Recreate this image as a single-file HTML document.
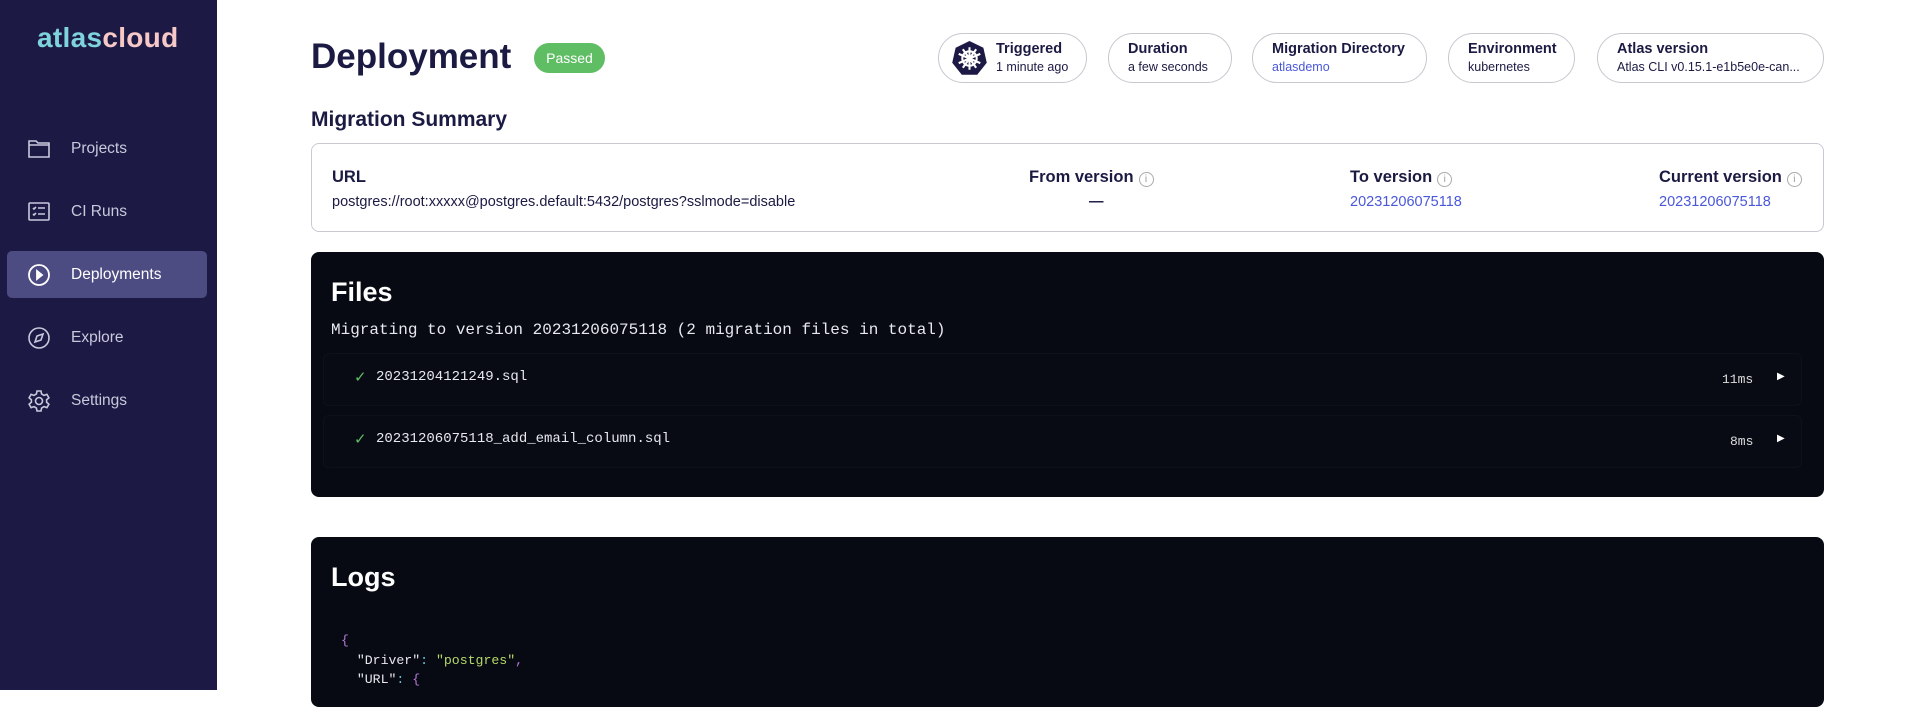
<!DOCTYPE html>
<html><head><meta charset="utf-8"><style>
*{box-sizing:border-box;margin:0;padding:0}
body{width:1912px;height:690px;overflow:hidden;background:#fff;font-family:"Liberation Sans",sans-serif;position:relative;color:#1b1a43}
.sb{position:absolute;left:0;top:0;width:217px;height:690px;background:#1c1a44}
.logo{position:absolute;left:37px;top:22px;font-size:28px;font-weight:bold;letter-spacing:0.3px}
.nav{position:absolute;left:7px;width:200px;height:47px;border-radius:5px;color:#c9c8dc;font-size:15.5px}
.nav span{position:absolute;left:64px;top:15px}
.nav svg{position:absolute;left:20px;top:12px}
.act{background:#4c4b82;color:#fff}
.abs{position:absolute}
h1{position:absolute;left:311px;top:37px;font-size:35px;font-weight:bold;color:#1b1a43}
.badge{position:absolute;left:534px;top:43px;width:71px;height:30px;border-radius:15px;background:#5fbe64;color:#fff;font-size:14px;text-align:center;line-height:30px}
.chip{position:absolute;top:33px;height:50px;border:1px solid #c7c7cf;border-radius:25px;padding:7px 0 0 19px}
.chip b{display:block;font-size:14.5px;color:#1b1a43}
.chip i{display:block;font-style:normal;font-size:12.5px;margin-top:3px;color:#1b1a43}
.lnk{color:#4a57d9!important}
.sum{position:absolute;left:311px;top:143px;width:1513px;height:89px;border:1px solid #c9c9d3;border-radius:8px}
.lab{position:absolute;font-size:16.5px;font-weight:bold;color:#1b1a43}
.val{position:absolute;font-size:14.5px;color:#1b1a43}
.info{display:inline-block;width:15px;height:15px;border:1px solid #aaa;border-radius:50%;vertical-align:0px;margin-left:5px;font-size:10px;color:#999;text-align:center;line-height:13px;font-weight:normal}
.dark{position:absolute;left:311px;width:1513px;background:#070a12;border-radius:8px}
.dh{position:absolute;left:20px;font-size:27px;font-weight:bold;color:#fff}
.mono{font-family:"Liberation Mono",monospace}
.row{position:absolute;left:12px;width:1479px;height:53px;border-radius:6px;background:#080b14;border:1px solid #0e111a}
</style></head><body>
<div class="sb">
<div class="logo"><span style="color:#7fd3dc">atlas</span><span style="color:#f6c8c8">cloud</span></div>
<div class="nav" style="top:125px"><svg width="24" height="22" viewBox="0 0 24 22" fill="none" stroke="#c9c8dc" stroke-width="1.6"><path d="M2 4h7l2 2h11v14H2z"/><path d="M2 8h20"/></svg><span>Projects</span></div>
<div class="nav" style="top:188px"><svg width="24" height="22" viewBox="0 0 24 22" fill="none" stroke="#c9c8dc" stroke-width="1.6"><rect x="2" y="3" width="20" height="17" rx="1"/><path d="M6 8l1 1 2-2M6 14l1 1 2-2M11 8h7M11 14h7"/></svg><span>CI Runs</span></div>
<div class="nav act" style="top:251px"><svg width="24" height="24" viewBox="0 0 24 24" fill="none" stroke="#fff" stroke-width="1.8"><circle cx="12" cy="12" r="10"/><path d="M10 8l5 4-5 4z" fill="#fff"/></svg><span>Deployments</span></div>
<div class="nav" style="top:314px"><svg width="24" height="24" viewBox="0 0 24 24" fill="none" stroke="#c9c8dc" stroke-width="1.6"><circle cx="12" cy="12" r="10"/><path d="M16 8l-2 6-6 2 2-6z"/></svg><span>Explore</span></div>
<div class="nav" style="top:377px"><svg width="24" height="24" viewBox="0 0 24 24" fill="none" stroke="#c9c8dc" stroke-width="1.6"><circle cx="12" cy="12" r="3.5"/><path d="M10 2h4l.6 3 2.4 1.4 2.9-1 2 3.4-2.3 2v2.4l2.3 2-2 3.4-2.9-1L14.6 19l-.6 3h-4l-.6-3L7 17.6l-2.9 1-2-3.4 2.3-2v-2.4l-2.3-2 2-3.4 2.9 1L9.4 5z"/></svg><span>Settings</span></div>
</div>

<h1>Deployment</h1>
<div class="badge">Passed</div>

<div class="chip" style="left:938px;width:149px;padding-left:57px"><svg class="abs" style="left:12px;top:6px" width="37" height="37" viewBox="0 0 36 36"><path d="M18 1l13.5 6.5 3.3 14.6-9.3 11.7H10.5L1.2 22.1 4.5 7.5z" fill="#1c1a44"/><g fill="none" stroke="#fff" stroke-width="2"><circle cx="18" cy="18" r="7"/><path d="M18 7v22M7.5 13.5l21 9M7.5 22.5l21-9M11.5 27l13-18M11.5 9l13 18"/></g></svg><b>Triggered</b><i>1 minute ago</i></div>
<div class="chip" style="left:1108px;width:124px"><b>Duration</b><i>a few seconds</i></div>
<div class="chip" style="left:1252px;width:175px"><b>Migration Directory</b><i class="lnk">atlasdemo</i></div>
<div class="chip" style="left:1448px;width:127px"><b>Environment</b><i>kubernetes</i></div>
<div class="chip" style="left:1597px;width:227px"><b>Atlas version</b><i>Atlas CLI v0.15.1-e1b5e0e-can...</i></div>

<div class="abs" style="left:311px;top:108px;font-size:21px;font-weight:bold">Migration Summary</div>
<div class="sum">
<div class="lab" style="left:20px;top:24px">URL</div>
<div class="val" style="left:20px;top:50px">postgres://root:xxxxx@postgres.default:5432/postgres?sslmode=disable</div>
<div class="lab" style="left:717px;top:24px">From version<span class="info">i</span></div>
<div class="val" style="left:777px;top:50px;font-weight:bold">—</div>
<div class="lab" style="left:1038px;top:24px">To version<span class="info">i</span></div>
<div class="val" style="left:1038px;top:50px;color:#4a57d9">20231206075118</div>
<div class="lab" style="left:1347px;top:24px">Current version<span class="info">i</span></div>
<div class="val" style="left:1347px;top:50px;color:#4a57d9">20231206075118</div>
</div>

<div class="dark" style="top:252px;height:245px">
<div class="dh" style="top:25px">Files</div>
<div class="abs mono" style="left:20px;top:69px;font-size:16px;color:#e8e8ee">Migrating to version 20231206075118 (2 migration files in total)</div>
<div class="row" style="top:101px"><span class="abs" style="left:30px;top:14px;color:#5fbe64;font-size:15px">✓</span><span class="abs mono" style="left:52px;top:15px;font-size:14px;color:#e8e8ee">20231204121249.sql</span><span class="abs mono" style="left:1398px;top:18px;font-size:13px;color:#ddd">11ms</span><span class="abs" style="left:1453px;top:17px;color:#fff;font-size:10px">▶</span></div>
<div class="row" style="top:163px"><span class="abs" style="left:30px;top:14px;color:#5fbe64;font-size:15px">✓</span><span class="abs mono" style="left:52px;top:15px;font-size:14px;color:#e8e8ee">20231206075118_add_email_column.sql</span><span class="abs mono" style="left:1406px;top:18px;font-size:13px;color:#ddd">8ms</span><span class="abs" style="left:1453px;top:17px;color:#fff;font-size:10px">▶</span></div>
</div>

<div class="dark" style="top:537px;height:170px">
<div class="dh" style="top:25px">Logs</div>
<div class="abs mono" style="left:30px;top:94px;font-size:13.2px;line-height:19.5px;color:#e8e8ee;white-space:pre"><span style="color:#b57ad9">{</span>
  "Driver"<span style="color:#6cc3d9">:</span> <span style="color:#b5d96a">"postgres"</span><span style="color:#b57ad9">,</span>
  "URL"<span style="color:#6cc3d9">:</span> <span style="color:#b57ad9">{</span></div>
</div>
</body></html>
